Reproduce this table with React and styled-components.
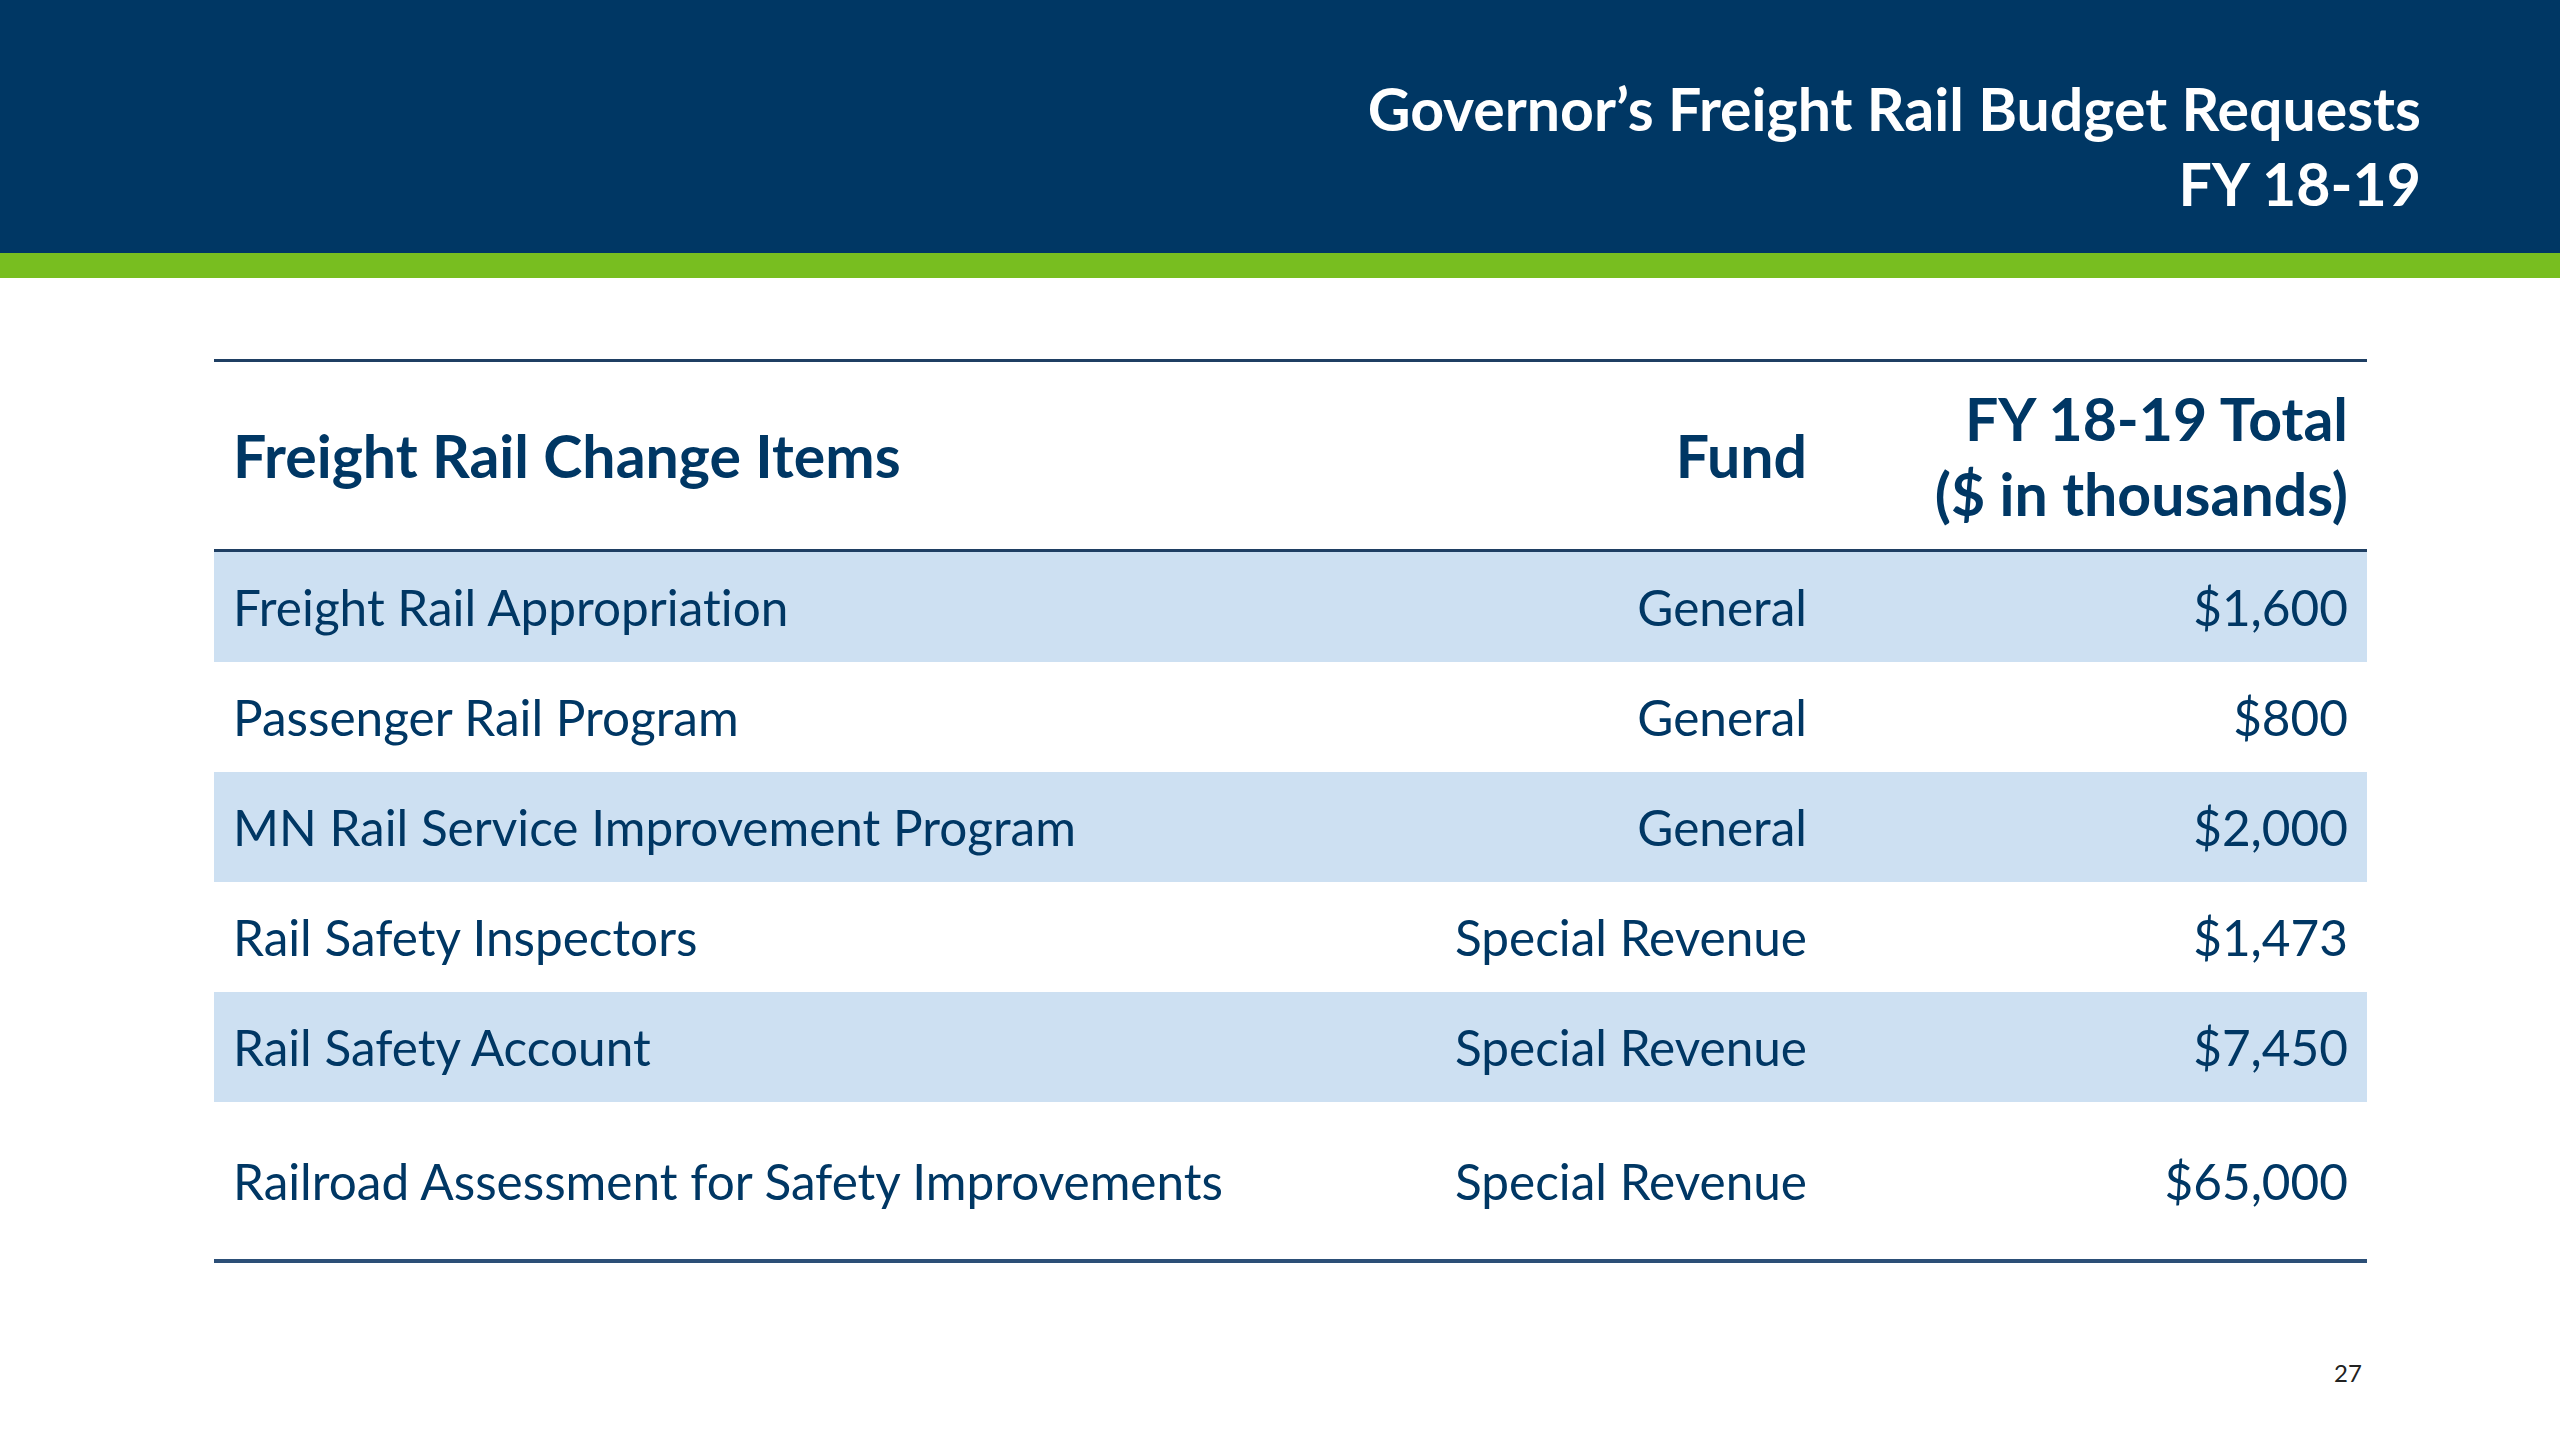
import React from "react";
import styled, { createGlobalStyle } from "styled-components";

const GlobalStyle = createGlobalStyle`
  html, body {
    margin: 0;
    padding: 0;
    background: #ffffff;
  }
  body {
    font-family: Lato, "Open Sans", sans-serif;
    font-variant-ligatures: none;
  }
`;

const Slide = styled.div`
  width: 2560px;
  height: 1440px;
  display: flex;
  flex-direction: column;
  background: #ffffff;
  overflow: hidden;
`;

const Header = styled.header`
  height: 253px;
  background: #003764;
  border-bottom: 25px solid #78be20;
  display: flex;
  flex-direction: column;
  align-items: flex-end;
  justify-content: center;
  padding: 0 139px 0 0;
  box-sizing: content-box;
`;

const Title = styled.h1`
  margin: 0;
  color: #ffffff;
  font-size: 59px;
  font-weight: 700;
  line-height: 75px;
  text-align: right;
  padding-top: 38px;
`;

const Body = styled.main`
  flex: 1;
  display: flex;
  flex-direction: column;
  padding: 81px 193px 0 214px;
`;

const Table = styled.table`
  width: 100%;
  border-collapse: collapse;
  color: #003764;
  border-top: 3px solid #1f3f63;
  border-bottom: 4px solid #2c4f77;
`;

const HeadCell = styled.th`
  height: 187px;
  padding: 0 19px;
  font-size: 59px;
  font-weight: 700;
  line-height: 75px;
  text-align: ${(p) => p.$align || "left"};
  border-bottom: 3px solid #1f3f63;
  width: ${(p) => p.$width || "auto"};
`;

const Row = styled.tr`
  background: ${(p) => (p.$shaded ? "#cde0f2" : "#ffffff")};
`;

const Cell = styled.td`
  height: ${(p) => p.$height || "110px"};
  padding: 0 19px;
  font-size: 49.5px;
  font-weight: 400;
  text-align: ${(p) => p.$align || "left"};
  white-space: nowrap;
`;

const Footer = styled.div`
  display: flex;
  justify-content: flex-end;
  padding: 95px 0 0;
  font-family: Lato, sans-serif;
  font-size: 24px;
  color: #222222;
  span {
    width: 36px;
    text-align: center;
    margin-right: 1px;
  }
`;

const rows = [
  { item: "Freight Rail Appropriation", fund: "General", total: "$1,600" },
  { item: "Passenger Rail Program", fund: "General", total: "$800" },
  { item: "MN Rail Service Improvement Program", fund: "General", total: "$2,000" },
  { item: "Rail Safety Inspectors", fund: "Special Revenue", total: "$1,473" },
  { item: "Rail Safety Account", fund: "Special Revenue", total: "$7,450" },
  {
    item: "Railroad Assessment for Safety Improvements",
    fund: "Special Revenue",
    total: "$65,000",
    tall: true,
  },
];

const App = () => {
  return (
    <>
      <GlobalStyle />
      <Slide>
        <Header>
          <Title>
            Governor’s Freight Rail Budget Requests
            <br />
            FY 18-19
          </Title>
        </Header>
        <Body>
          <Table>
            <thead>
              <tr>
                <HeadCell>Freight Rail Change Items</HeadCell>
                <HeadCell $align="right" $width="500px">
                  Fund
                </HeadCell>
                <HeadCell $align="right" $width="503px">
                  FY 18-19 Total
                  <br />
                  ($ in thousands)
                </HeadCell>
              </tr>
            </thead>
            <tbody>
              {rows.map((r, i) => (
                <Row key={r.item} $shaded={i % 2 === 0 && !r.tall}>
                  <Cell $height={r.tall ? "157px" : "110px"}>{r.item}</Cell>
                  <Cell $align="right">{r.fund}</Cell>
                  <Cell $align="right">{r.total}</Cell>
                </Row>
              ))}
            </tbody>
          </Table>
          <Footer>
            <span>27</span>
          </Footer>
        </Body>
      </Slide>
    </>
  );
};

export default App;
